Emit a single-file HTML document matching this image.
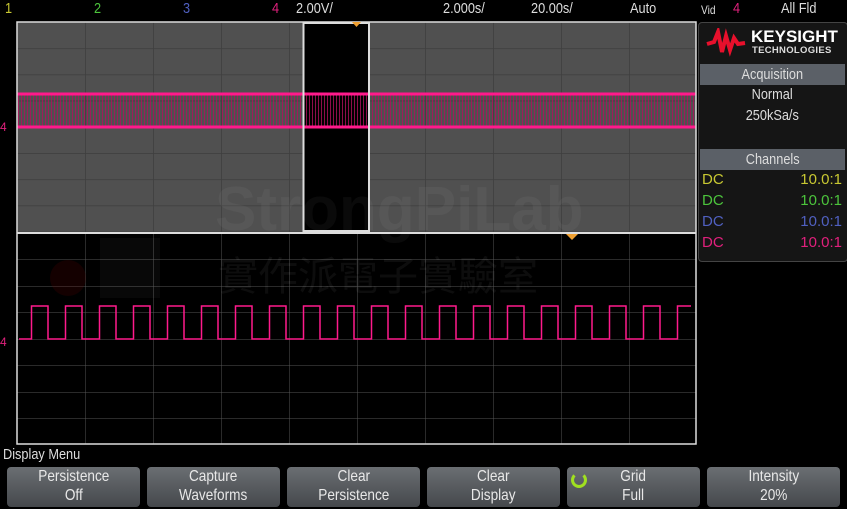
<!DOCTYPE html>
<html><head><style>
body{margin:0;width:847px;height:509px;background:#000;overflow:hidden;position:relative;font-family:"Liberation Sans",sans-serif;}
.t{position:absolute;font-size:15px;top:0px;transform:scaleX(.85);transform-origin:left top;}
.btn{position:absolute;top:467px;width:133px;height:40px;border-radius:4px;background:linear-gradient(#6a6e72,#45484c);color:#e8e8e8;text-align:center;font-size:16px;line-height:19px;}
.btn span{display:inline-block;transform:scaleX(.85);}
.hd{position:absolute;left:700px;width:145px;height:21px;background:#5b6067;color:#ddd;text-align:center;font-size:15px;line-height:21px;}
.row{position:absolute;left:702px;width:140px;font-size:15px;}
</style></head><body>
<div class="t" style="left:5px;color:#c8c832">1</div>
<div class="t" style="left:94px;color:#4cc43c">2</div>
<div class="t" style="left:183px;color:#5060c0">3</div>
<div class="t" style="left:272px;color:#e0207c">4</div>
<div class="t" style="left:296px;color:#ddd">2.00V/</div>
<div class="t" style="left:443px;color:#ddd">2.000s/</div>
<div class="t" style="left:531px;color:#ddd">20.00s/</div>
<div class="t" style="left:630px;color:#ddd">Auto</div>
<div class="t" style="left:701px;color:#ddd;font-size:12px;top:3px">Vid</div>
<div class="t" style="left:733px;color:#e0207c">4</div>
<div class="t" style="left:781px;color:#ddd">All Fld</div>

<svg width="847" height="509" style="position:absolute;left:0;top:0">
<defs>
<pattern id="g1" x="17" y="22" width="68" height="26.2" patternUnits="userSpaceOnUse"><path d="M0 0V27M0 0H68" stroke="#3e3e3e" stroke-width="1.5" fill="none"/></pattern>
<pattern id="g2" x="17" y="233" width="68" height="26.5" patternUnits="userSpaceOnUse"><path d="M0 0V27M0 0H68" stroke="#555" stroke-width="1" fill="none"/></pattern>
<pattern id="vl" x="0" y="0" width="3" height="40" patternUnits="userSpaceOnUse"><rect width="1" height="40" fill="#b0105c"/></pattern>
<pattern id="sq" x="30" y="0" width="34" height="509" patternUnits="userSpaceOnUse"><path d="M0 339H1.5V306H18V339H34" stroke="#ff1a8c" stroke-width="1.5" fill="none"/></pattern>
</defs>
<rect x="17" y="22" width="679" height="210" fill="#505050"/>
<rect x="17" y="22" width="679" height="210" fill="url(#g1)"/>
<rect x="303" y="22" width="66" height="210" fill="#000"/>
<rect x="17" y="233" width="679" height="211" fill="url(#g2)"/>
<rect x="17" y="94" width="679" height="33" fill="url(#vl)" opacity=".8"/>
<line x1="17" y1="94" x2="696" y2="94" stroke="#ff1a8c" stroke-width="3"/>
<line x1="17" y1="127" x2="696" y2="127" stroke="#ff1a8c" stroke-width="3"/>
<rect x="19" y="290" width="672" height="60" fill="url(#sq)"/>
<rect x="17" y="22" width="679" height="422" fill="none" stroke="#ddd" stroke-width="1.5"/>
<line x1="17" y1="233" x2="696" y2="233" stroke="#ddd" stroke-width="2"/>
<rect x="303.5" y="23" width="65.5" height="208" fill="none" stroke="#ddd" stroke-width="2"/>
<path d="M352 22h9l-4.5 5z" fill="#f0a030"/>
<path d="M566 234h12l-6 6z" fill="#f0a030"/>
<text x="0" y="131" fill="#e0207c" font-size="12">4</text>
<text x="0" y="346" fill="#e0207c" font-size="12">4</text>
<text x="215" y="230" fill="#fff" opacity=".04" font-size="62" font-weight="bold" font-family="Liberation Sans">StrongPiLab</text>
<text x="218" y="290" fill="#fff" opacity=".05" font-size="40" font-family="Noto Sans CJK TC">實作派電子實驗室</text>
<circle cx="68" cy="278" r="18" fill="#600" opacity=".2"/>
<rect x="100" y="238" width="60" height="60" fill="#fff" opacity=".03"/>
</svg>

<div style="position:absolute;left:698px;top:22px;width:148px;height:238px;border:1px solid #444;border-radius:4px;background:#151515"></div>
<svg width="40" height="30" style="position:absolute;left:706px;top:28px"><path d="M1 16L8 14 12 4 16 24 20 8 24 22 28 10 32 16 39 15" stroke="#e8102c" stroke-width="4" fill="none"/></svg>
<div style="position:absolute;left:751px;top:27px;color:#fff;font-weight:bold;font-size:17px">KEYSIGHT</div>
<div style="position:absolute;left:752px;top:45px;color:#ddd;font-weight:bold;font-size:9.5px;letter-spacing:.3px">TECHNOLOGIES</div>
<div class="hd" style="top:64px"><span style="display:inline-block;transform:scaleX(.85)">Acquisition</span></div>
<div class="row" style="top:86px;text-align:center;color:#ddd"><span style="display:inline-block;transform:scaleX(.85)">Normal</span></div>
<div class="row" style="top:107px;text-align:center;color:#ddd"><span style="display:inline-block;transform:scaleX(.85)">250kSa/s</span></div>
<div class="hd" style="top:149px"><span style="display:inline-block;transform:scaleX(.85)">Channels</span></div>
<div class="row" style="top:171px;color:#c8c832">DC<span style="float:right">10.0:1</span></div>
<div class="row" style="top:192px;color:#4cc43c">DC<span style="float:right">10.0:1</span></div>
<div class="row" style="top:213px;color:#5060c0">DC<span style="float:right">10.0:1</span></div>
<div class="row" style="top:234px;color:#e0207c">DC<span style="float:right">10.0:1</span></div>

<div style="position:absolute;left:3px;top:446px;color:#ddd;font-size:15px;transform:scaleX(.85);transform-origin:left top">Display Menu</div>
<div class="btn" style="left:7px"><span>Persistence<br>Off</span></div>
<div class="btn" style="left:147px"><span>Capture<br>Waveforms</span></div>
<div class="btn" style="left:287px"><span>Clear<br>Persistence</span></div>
<div class="btn" style="left:427px"><span>Clear<br>Display</span></div>
<div class="btn" style="left:567px"><span>Grid<br>Full</span></div>
<div style="position:absolute;left:571px;top:472px;width:10px;height:10px;border:3px solid #a0e020;border-radius:50%;border-top-color:transparent"></div>
<div class="btn" style="left:707px"><span>Intensity<br>20%</span></div>
</body></html>
